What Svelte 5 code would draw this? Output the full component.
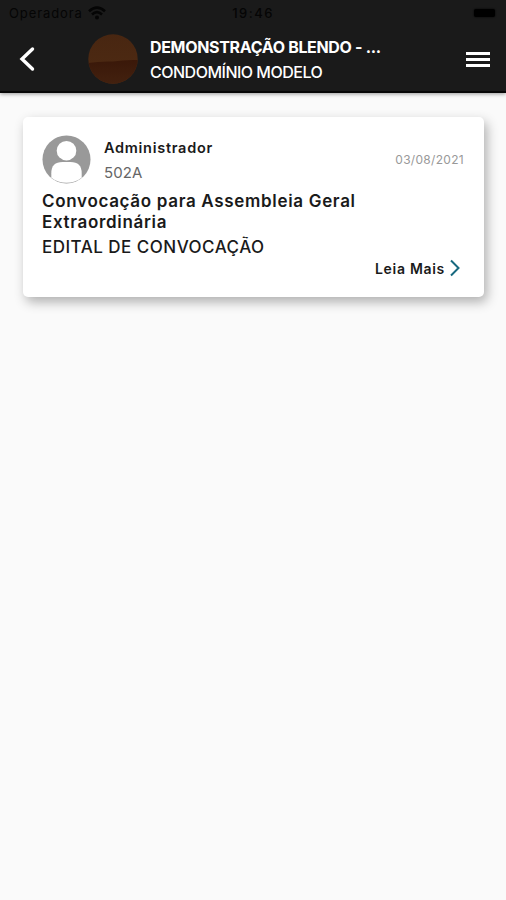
<script>
    let carrier = "Operadora";
    let time = "19:46";

    let condo = {
        name: "DEMONSTRAÇÃO BLENDO - ...",
        unit: "CONDOMÍNIO MODELO",
    };

    let notices = [
        {
            author: "Administrador",
            apartment: "502A",
            date: "03/08/2021",
            title: "Convocação para Assembleia Geral Extraordinária",
            summary: "EDITAL DE CONVOCAÇÃO",
        },
    ];
</script>

<div class="screen">
    <header>
        <div class="status">
            <div class="status--left">
                <span>{carrier}</span>
                <svg class="wifi" viewBox="0 0 18 14">
                    <path d="M1 5.2Q9 -2 17 5.2M4 8.4Q9 4 14 8.4" />
                    <circle cx="9" cy="11.4" r="2" />
                </svg>
            </div>
            <span class="time">{time}</span>
            <div class="status--right">
                <div class="battery"></div>
            </div>
        </div>
        <div class="nav">
            <button class="back" aria-label="Voltar">
                <svg viewBox="0 0 18 26">
                    <path d="M14.5 3L4 13L14.5 23" />
                </svg>
            </button>
            <svg class="planet" viewBox="0 0 50 50">
                <defs>
                    <linearGradient id="sky" x1="0" y1="0" x2="0" y2="1">
                        <stop offset="0" stop-color="#482611" />
                        <stop offset="1" stop-color="#4f2b13" />
                    </linearGradient>
                    <linearGradient id="sand" x1="0" y1="0" x2="0" y2="1">
                        <stop offset="0" stop-color="#3a1809" />
                        <stop offset="1" stop-color="#43210f" />
                    </linearGradient>
                    <clipPath id="round">
                        <circle cx="25" cy="25" r="24.7" />
                    </clipPath>
                </defs>
                <g clip-path="url(#round)">
                    <rect width="50" height="50" fill="url(#sky)" />
                    <path
                        d="M0 29Q12 27 25 27.5Q37 25.5 50 26V50H0Z"
                        fill="url(#sand)"
                    />
                </g>
            </svg>
            <div class="condo">
                <h1>{condo.name}</h1>
                <h2>{condo.unit}</h2>
            </div>
            <button class="menu" aria-label="Menu">
                <i></i>
                <i></i>
                <i></i>
            </button>
        </div>
    </header>

    <main>
        {#each notices as notice}
            <article class="card">
                <div class="card--top">
                    <svg class="avatar" viewBox="0 0 50 50">
                        <circle cx="25" cy="25" r="24.5" fill="#999" />
                        <circle cx="25" cy="16" r="10" fill="#fff" />
                        <path
                            d="M9.5 43.5V39Q9.5 27.6 21 27.6H29Q40.5 27.6 40.5 39V43.5Q34 48.6 25 48.6T9.5 43.5Z"
                            fill="#fff"
                        />
                    </svg>
                    <div class="author">
                        <strong>{notice.author}</strong>
                        <span>{notice.apartment}</span>
                    </div>
                    <time>{notice.date}</time>
                </div>
                <h3>{notice.title}</h3>
                <p>{notice.summary}</p>
                <div class="more">
                    <span>Leia Mais</span>
                    <svg viewBox="0 0 12 18">
                        <path d="M2 1.5L9.5 9L2 16.5" />
                    </svg>
                </div>
            </article>
        {/each}
    </main>
</div>

<style>
    :global(body) {
        background: #fafafa;
    }

    .screen {
        background: #fafafa;
        font-family: Inter, Roboto, sans-serif;
        min-height: 900px;
    }

    header {
        background: #1a1a1a;
        border-bottom: 2px solid #070707;
        box-shadow: 0 1px 4px rgba(0, 0, 0, 0.4);
        box-sizing: border-box;
        height: 93px;
    }

    .status {
        align-items: center;
        color: #050505;
        display: grid;
        font-size: 13px;
        grid-template-columns: 1fr auto 1fr;
        height: 26px;
        letter-spacing: 0.9px;
        padding: 0 9px;
    }

    .status--left {
        align-items: center;
        display: flex;
        gap: 5px;
    }

    .wifi {
        fill: #050505;
        height: 14px;
        width: 18px;
    }

    .wifi path {
        fill: none;
        stroke: #050505;
        stroke-width: 2.6;
    }

    .time {
        font-weight: 500;
        letter-spacing: 1.5px;
    }

    .status--right {
        display: flex;
        justify-content: flex-end;
    }

    .battery {
        background: #000;
        border-radius: 2px;
        box-shadow: 0 0 2px #000;
        height: 8px;
        margin-right: 2px;
        width: 21px;
    }

    .nav {
        align-items: center;
        display: flex;
        height: 65px;
        padding: 0 16px 0 18px;
    }

    button {
        background: transparent;
        border: none;
        cursor: pointer;
        padding: 0;
    }

    .back {
        height: 26px;
        width: 18px;
    }

    .back svg {
        display: block;
        height: 26px;
        width: 18px;
    }

    .back path {
        fill: none;
        stroke: #fff;
        stroke-linecap: round;
        stroke-width: 3.4;
    }

    .planet {
        height: 50px;
        margin-left: 52px;
        width: 50px;
    }

    .condo {
        color: #fff;
        flex: 1;
        margin-left: 12px;
        padding-top: 2px;
        white-space: nowrap;
    }

    .condo h1 {
        font-size: 16px;
        font-weight: 700;
        letter-spacing: -0.33px;
        line-height: 25px;
        margin: 0;
    }

    .condo h2 {
        font-size: 16px;
        font-weight: 500;
        letter-spacing: -0.5px;
        line-height: 25px;
        margin: 0;
    }

    .menu {
        display: flex;
        flex-direction: column;
        gap: 3px;
        padding-top: 2px;
        width: 24px;
    }

    .menu i {
        background: #fff;
        height: 3px;
        width: 100%;
    }

    main {
        padding: 24px 22px 0 23px;
    }

    .card {
        background: #fff;
        border-radius: 5px;
        box-shadow: 3px 5px 12px rgba(0, 0, 0, 0.3);
        box-sizing: border-box;
        color: #1a1a1a;
        height: 180px;
        padding: 18px 20px 0 19px;
    }

    .card--top {
        display: flex;
        height: 50px;
    }

    .avatar {
        height: 49px;
        width: 49px;
    }

    .author {
        display: flex;
        flex: 1;
        flex-direction: column;
        margin-left: 13px;
    }

    .author strong {
        font-size: 14.5px;
        font-weight: 600;
        letter-spacing: 0.72px;
        line-height: 25px;
    }

    .author span {
        color: #666;
        font-size: 15px;
        letter-spacing: 0.1px;
        line-height: 25px;
    }

    time {
        color: #999;
        font-size: 12px;
        letter-spacing: 0.3px;
        line-height: 50px;
    }

    h3 {
        font-size: 17px;
        font-weight: 600;
        letter-spacing: 0.68px;
        line-height: 20.5px;
        margin: 6px 60px 0 0;
    }

    .card p {
        font-size: 17px;
        font-weight: 500;
        letter-spacing: 0.48px;
        line-height: 22px;
        margin: 4px 0 0;
    }

    .more {
        align-items: center;
        display: flex;
        font-size: 14px;
        font-weight: 600;
        gap: 4px;
        height: 20px;
        justify-content: flex-end;
        letter-spacing: 0.7px;
        padding-right: 3px;
    }

    .more svg {
        height: 18px;
        width: 12px;
    }

    .more path {
        fill: none;
        stroke: #17697f;
        stroke-width: 2;
    }
</style>
